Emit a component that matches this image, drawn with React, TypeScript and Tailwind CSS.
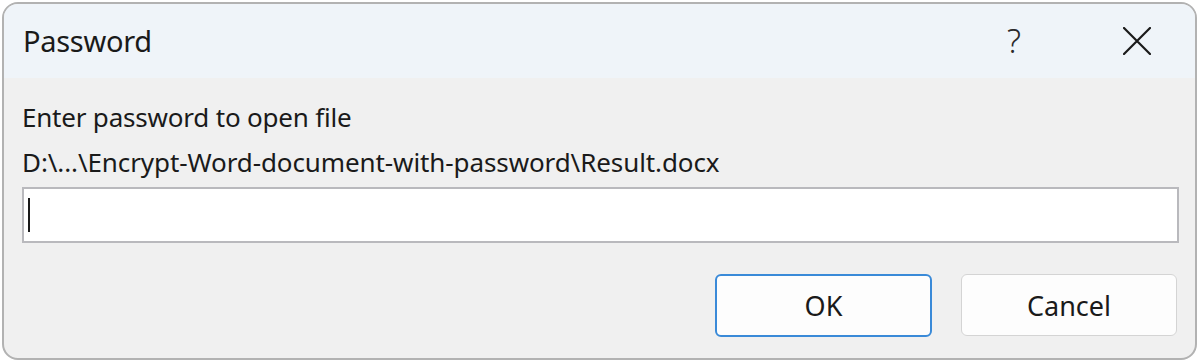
// Password prompt dialog

const font = { fontFamily: '"Noto Sans", "Open Sans", sans-serif' };

function CloseIcon() {
  return (
    <svg width="28" height="28" viewBox="0 0 28 28" className="text-[#1a1a1a]">
      <path d="M1 1L27 27M27 1L1 27" stroke="currentColor" strokeWidth="2.2" strokeLinecap="round" />
    </svg>
  );
}

export default function App() {
  return (
    <div className="w-[1200px] h-[363px] bg-white pt-[2px] pl-[2px]" style={font}>
      <div className="w-[1195px] h-[358px] flex flex-col border-2 border-[#b2b2b2] rounded-[16px] overflow-hidden bg-[#f0f0f0] text-[#1a1a1a]">
        {/* title bar */}
        <div className="h-[74px] shrink-0 flex items-center bg-[#eff4f9] pl-[19px] pr-[44px]">
          <span className="text-[29px] leading-none tracking-[-0.3px] pb-[2px]">Password</span>
          <div className="flex-1" />
          <span className="text-[33px] font-light leading-none text-[#2a2a2a] mr-[102px] pb-[2px]">?</span>
          <CloseIcon />
        </div>

        {/* body */}
        <div className="flex-1 flex flex-col pl-[18px] pr-[16px] pt-[17px]">
          <div className="text-[26px] leading-[45px] tracking-[-0.2px]">Enter password to open file</div>
          <div className="text-[26px] leading-[45px] tracking-[-0.1px]">
            D:\...\Encrypt-Word-document-with-password\Result.docx
          </div>
          <div className="mt-[2px] h-[56px] bg-white border-2 border-[#b9b9bd] flex items-center pl-[4px]">
            <div className="w-[2px] h-[34px] bg-[#1a1a1a]" />
          </div>

          <div className="mt-[31px] flex justify-end gap-[29px] pr-[2px]">
            <button className="w-[217px] h-[63px] rounded-[6px] border-2 border-[#3a8ad8] bg-[#fdfdfd] text-[27px] leading-none">
              OK
            </button>
            <button className="w-[216px] h-[62px] rounded-[6px] border border-[#d4d4d4] bg-[#fdfdfd] text-[27px] leading-none">
              Cancel
            </button>
          </div>
        </div>
      </div>
    </div>
  );
}
